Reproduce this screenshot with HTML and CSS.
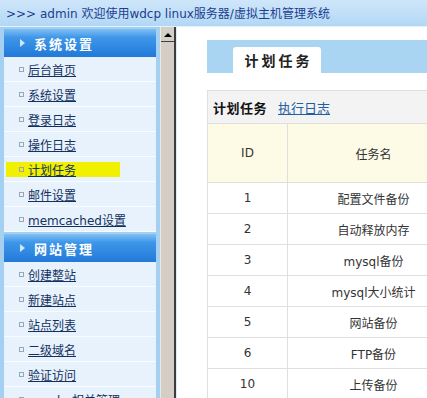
FILE: index.html
```html
<!DOCTYPE html>
<html lang="zh-CN">
<head>
<meta charset="utf-8">
<title>wdcp 管理系统</title>
<link rel="stylesheet" href="styles.css">
</head>
<body>
<div class="topbar">&gt;&gt;&gt; admin 欢迎使用wdcp linux服务器/虚拟主机管理系统</div>
<div class="frame">
  <aside class="sidebar">
    <div class="menu-head"><span class="arrow"></span><span>系统设置</span></div>
    <ul class="menu">
      <li><span class="hl"><span class="dot"></span><a class="lbl">后台首页</a></span></li>
      <li><span class="hl"><span class="dot"></span><a class="lbl">系统设置</a></span></li>
      <li><span class="hl"><span class="dot"></span><a class="lbl">登录日志</a></span></li>
      <li><span class="hl"><span class="dot"></span><a class="lbl">操作日志</a></span></li>
      <li><span class="hl on"><span class="dot"></span><a class="lbl">计划任务</a></span></li>
      <li><span class="hl"><span class="dot"></span><a class="lbl">邮件设置</a></span></li>
      <li><span class="hl"><span class="dot"></span><a class="lbl">memcached设置</a></span></li>
    </ul>
    <div class="menu-head second"><span class="arrow"></span><span>网站管理</span></div>
    <ul class="menu">
      <li><span class="hl"><span class="dot"></span><a class="lbl">创建整站</a></span></li>
      <li><span class="hl"><span class="dot"></span><a class="lbl">新建站点</a></span></li>
      <li><span class="hl"><span class="dot"></span><a class="lbl">站点列表</a></span></li>
      <li><span class="hl"><span class="dot"></span><a class="lbl">二级域名</a></span></li>
      <li><span class="hl"><span class="dot"></span><a class="lbl">验证访问</a></span></li>
      <li><span class="hl"><span class="dot"></span><a class="lbl">apache相关管理</a></span></li>
    </ul>
  </aside>
  <div class="scroll"><div class="scroll-btn"><span class="up"></span></div></div>
  <main class="main">
    <div class="tabbar"><div class="tab">计划任务</div></div>
    <table class="grid">
      <colgroup><col class="col-id"><col class="col-name"></colgroup>
      <tr class="r-title"><td colspan="2"><b class="cur">计划任务</b><a class="link">执行日志</a></td></tr>
      <tr class="r-head"><td>ID</td><td>任务名</td></tr>
      <tr class="r-data"><td>1</td><td>配置文件备份</td></tr>
      <tr class="r-data"><td>2</td><td>自动释放内存</td></tr>
      <tr class="r-data"><td>3</td><td>mysql备份</td></tr>
      <tr class="r-data"><td>4</td><td>mysql大小统计</td></tr>
      <tr class="r-data"><td>5</td><td>网站备份</td></tr>
      <tr class="r-data"><td>6</td><td>FTP备份</td></tr>
      <tr class="r-data"><td>10</td><td>上传备份</td></tr>
    </table>
  </main>
</div>
</body>
</html>
```
FILE: styles.css
```css
html, body {
  margin: 0;
  padding: 0;
  overflow: hidden;
}
body {
  width: 427px;
  height: 398px;
  background: #ffffff;
  font-family: "DejaVu Sans", "Noto Sans CJK SC", sans-serif;
  font-size: 12px;
  color: #333;
}
.topbar {
  height: 26px;
  line-height: 28px;
  padding-left: 6px;
  color: #1d3d8f;
  background: linear-gradient(#cfe6fa, #b2d8f5);
  border-bottom: 1px solid #e4f1fc;
  white-space: nowrap;
  overflow: hidden;
}
.frame {
  display: flex;
  height: 371px;
}
.sidebar {
  flex: none;
  width: 152px;
  padding: 2px 4px 0 4px;
  background: #a6d0f2;
  overflow: hidden;
}
.menu-head {
  height: 28px;
  display: flex;
  align-items: center;
  gap: 9px;
  padding-left: 16px;
  color: #fff;
  font-weight: bold;
  font-size: 13px;
  letter-spacing: 2px;
  background: linear-gradient(#80c0f4, #3f97e9 30%, #2179d9);
}
.menu-head.second {
  margin-top: 2px;
}
.arrow {
  width: 0;
  height: 0;
  border-left: 5px solid #cfe7fb;
  border-top: 4px solid transparent;
  border-bottom: 4px solid transparent;
}
.menu {
  list-style: none;
  margin: 0;
  padding: 0;
}
.menu li {
  height: 24px;
  display: flex;
  align-items: center;
  background: #e8f2fc;
  border-bottom: 1px solid #f8fcff;
}
.hl {
  box-sizing: border-box;
  display: flex;
  align-items: center;
  width: 114px;
  height: 15px;
  margin-left: 2px;
  padding-left: 13px;
}
.hl.on {
  background: #f0f000;
}
.dot {
  width: 3px;
  height: 3px;
  border: 1px solid #98a8ba;
  margin-right: 4px;
  flex: none;
}
.lbl {
  color: #13315f;
  text-decoration: underline;
  white-space: nowrap;
}
.scroll {
  flex: none;
  width: 13px;
  background: #d5cec6;
  border-left: 1px solid #ece8e2;
  border-right: 2px solid #3c3c3c;
}
.scroll-btn {
  margin-top: 2px;
  height: 12px;
  background: #d4d0c8;
  border-bottom: 1px solid #404040;
  display: flex;
  align-items: center;
  justify-content: center;
}
.up {
  width: 0;
  height: 0;
  border-bottom: 4px solid #000;
  border-left: 4px solid transparent;
  border-right: 4px solid transparent;
}
.main {
  flex: 1;
  min-width: 0;
  border-left: 1px solid #d6eefb;
  padding: 13px 0 0 30px;
}
.tabbar {
  box-sizing: border-box;
  width: 260px;
  height: 33px;
  padding-left: 26px;
  background: #a9d5f3;
  display: flex;
  align-items: flex-end;
}
.tab {
  box-sizing: border-box;
  width: 88px;
  height: 26px;
  padding-left: 3px;
  background: #fff;
  border-radius: 3px 3px 0 0;
  color: #222;
  font-weight: bold;
  font-size: 14px;
  letter-spacing: 3px;
  text-align: center;
  line-height: 28px;
}
.grid {
  border-collapse: collapse;
  width: 252px;
  margin-top: 17px;
  table-layout: fixed;
}
.col-id {
  width: 80px;
}
.col-name {
  width: 172px;
}
.grid td {
  border: 1px solid #dfdfdf;
  padding: 0;
  text-align: center;
  color: #333;
  white-space: nowrap;
}
.r-title td {
  height: 32px;
  text-align: left;
  padding-left: 5px;
  background: #f3f3f3;
  font-size: 13px;
}
.cur {
  color: #111;
  letter-spacing: 0.5px;
}
.link {
  margin-left: 11px;
  color: #1f5f9f;
  text-decoration: underline;
}
.r-head td {
  height: 58px;
  background: #fdfbe6;
}
.r-data td {
  height: 30px;
}
```
